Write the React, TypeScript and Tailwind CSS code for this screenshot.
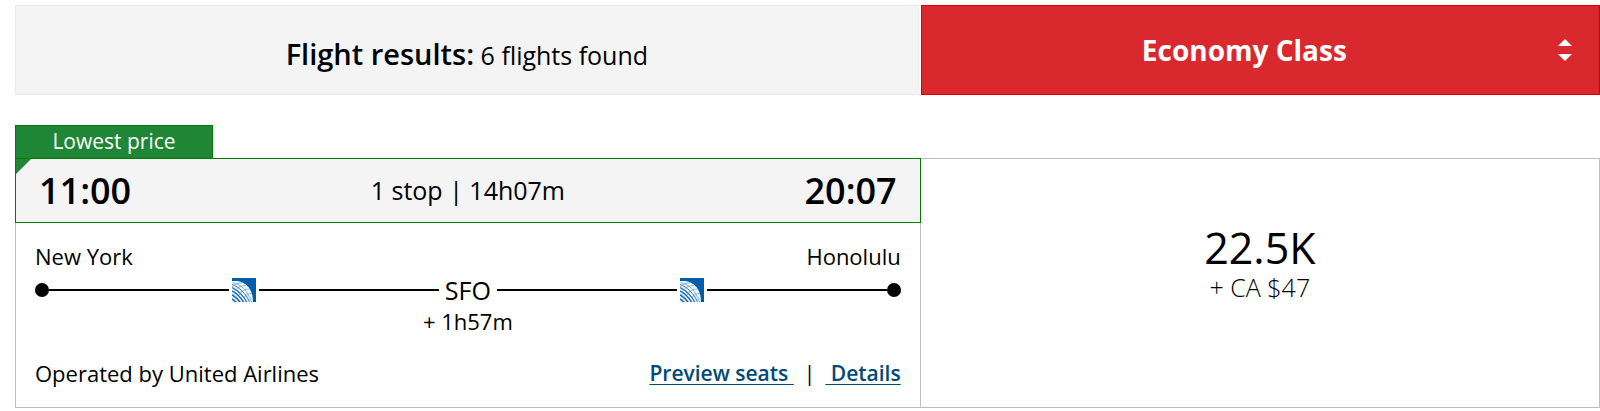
function UnitedLogo() {
  return (
    <svg viewBox="0 0 24 24" className="mx-[3px] size-6 shrink-0" role="img" aria-label="United Airlines">
      <rect width="24" height="24" fill="#005daa" />
      {/* globe: pale sphere, blue meridians running to the lower right, thin parallels across */}
      <path d="M0 3.2C11 1.5 21.5 9 20.8 24H0Z" fill="#eef4fa" />
      <g fill="none" stroke="#1f6eb5">
        <path d="M1 4.800C9 6 16 13 19.500 24" strokeWidth="0.5" />
        <path d="M0 6.500C7 9 14 15.500 17.500 24" strokeWidth="0.9" />
        <path d="M0 9.500C6 12.500 11.500 17.500 15 24.500" strokeWidth="1.200" />
        <path d="M0 13C4.500 15.500 9 19.500 12 25" strokeWidth="1.500" />
        <path d="M0 16.800C3.500 19 6.500 21.500 8.500 25" strokeWidth="1.700" />
        <path d="M0 21C2 22 3.500 23.500 4.500 25" strokeWidth="1.800" />
      </g>
      <g fill="none" stroke="#5b95c8" strokeWidth="0.6">
        <path d="M0 9C3 6.500 6 5 10 4.800" />
        <path d="M2 14C5 9.500 9 7.500 14 7.300" />
        <path d="M7 17C9 13 13 11 17.500 11" />
        <path d="M12 20C13.500 17 16 15.500 20 15.500" />
      </g>
    </svg>
  );
}

function Line() {
  return <div className="h-[2px] flex-1 bg-black" />;
}

function Dot() {
  return <div className="size-[14px] shrink-0 rounded-full bg-black" />;
}

function ResultsHeader() {
  return (
    <header className="grid h-[90px] grid-cols-[4fr_3fr]">
      <div className="mr-[2px] flex items-center justify-center border border-[#ebebeb] bg-[#f4f4f4] pt-2">
        <h1 className="text-[25px] leading-9">
          <span className="text-[29px] font-semibold">Flight results:</span> 6 flights found
        </h1>
      </div>
      <button className="relative border border-[#d20000] bg-[#d9292e] pr-8 text-[28px] leading-9 font-bold text-white">
        Economy Class
        <svg viewBox="0 0 14 22" className="absolute top-[33px] right-[27px] h-[22px] w-[14px]" fill="currentColor">
          <path d="M7 0L14 7H0Z" />
          <path d="M0 15H14L7 22Z" />
        </svg>
      </button>
    </header>
  );
}

function Route() {
  return (
    <div className="px-[19px] pt-[17px] text-[22px] leading-8">
      <div className="flex justify-between">
        <span>New York</span>
        <span>Honolulu</span>
      </div>
      <div className="flex h-9 items-center">
        <Dot />
        <Line />
        <UnitedLogo />
        <Line />
        <span className="px-[6px] text-[25px]">SFO</span>
        <Line />
        <UnitedLogo />
        <Line />
        <Dot />
      </div>
      <div className="text-center leading-[26px]">+ 1h57m</div>
    </div>
  );
}

function FlightCard() {
  return (
    <article>
      <div className="flex h-[33px] w-[198px] justify-center border border-b-0 border-[#007a00] bg-[#1f8636] text-[21px] leading-[30px] text-white">
        Lowest price
      </div>
      <div className="grid grid-cols-[4fr_3fr]">
        <div className="border border-t-0 border-[#bcc0c4]">
          <div className="relative -mx-px grid h-[65px] grid-cols-[1fr_auto_1fr] items-center border border-[#007a00] bg-[#f4f4f4] px-[23px]">
            <svg viewBox="0 0 15 15" className="absolute top-0 left-0 size-[15px]" fill="#1f8636">
              <path d="M0 0H15L0 15Z" />
            </svg>
            <time className="text-[36px] font-semibold">11:00</time>
            <span className="text-[25px]">1 stop | 14h07m</span>
            <time className="text-right text-[36px] font-semibold">20:07</time>
          </div>
          <Route />
          <div className="flex justify-between px-[19px] pt-[23px] pb-[18px] text-[22px] leading-8">
            <span>Operated by United Airlines</span>
            <div className="flex gap-[10px] text-[21px] whitespace-pre">
              <a href="#seats" className="font-semibold text-[#004a78] underline decoration-1 underline-offset-3">
                {"Preview seats "}
              </a>
              <span>|</span>
              <a href="#details" className="font-semibold text-[#004a78] underline decoration-1 underline-offset-3">
                {" Details"}
              </a>
            </div>
          </div>
        </div>
        <button className="flex flex-col items-center border border-l-0 border-[#bcc0c4] pt-[60px]">
          <span className="text-[43px] leading-[58px]">22.5K</span>
          <span className="text-[25px] leading-5 font-light">+ CA $47</span>
        </button>
      </div>
    </article>
  );
}

export default function App() {
  return (
    <main className="flex flex-col gap-[30px] bg-white pt-[5px] pl-[15px] font-['Open_Sans',sans-serif] text-black">
      <ResultsHeader />
      <FlightCard />
    </main>
  );
}
